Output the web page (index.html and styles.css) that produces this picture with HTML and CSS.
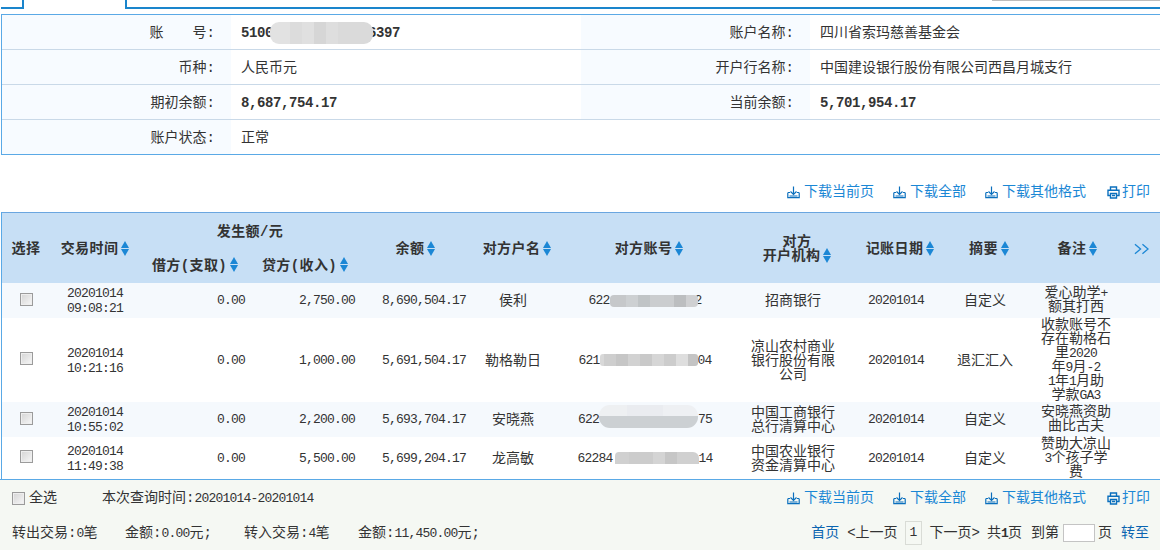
FILE: index.html
```html
<!DOCTYPE html>
<html lang="zh-CN">
<head>
<meta charset="utf-8">
<title>账户明细</title>
<link rel="stylesheet" href="styles.css">
</head>
<body>
<svg class="defs" width="0" height="0" aria-hidden="true">
  <symbol id="dl" viewBox="0 0 13 13">
    <path d="M6.5 0.5V8M3.5 5.5L6.5 8.5L9.5 5.5M1 6.5H3M10 6.5H12M0.8 6.5V11.7H12.2V6.5M2.5 10H10.5" fill="none" stroke="currentColor" stroke-width="1.2"/>
  </symbol>
  <symbol id="pr" viewBox="0 0 13 13">
    <path d="M3.5 4V1H9.5V4M3.5 9.5H1V4.2H12V9.5H9.5M3.5 7.5H9.5V12H3.5ZM5 9.5H8" fill="none" stroke="currentColor" stroke-width="1.4"/>
  </symbol>
</svg>

<div class="tabs">
  <div class="tab-start"></div>
  <div class="tab-active"></div>
  <div class="tab-rest"></div>
  <div class="tab-shade"></div>
</div>

<section class="info">
  <div class="lbl">账<span class="wide"></span>号:</div>
  <div class="val"><b class="num-b">5100</b><span class="blur blur-acc"></span><b class="num-b">6397</b></div>
  <div class="lbl">账户名称:</div>
  <div class="val">四川省索玛慈善基金会</div>
  <div class="lbl">币种:</div>
  <div class="val">人民币元</div>
  <div class="lbl">开户行名称:</div>
  <div class="val">中国建设银行股份有限公司西昌月城支行</div>
  <div class="lbl">期初余额:</div>
  <div class="val"><b class="num-b">8,687,754.17</b></div>
  <div class="lbl">当前余额:</div>
  <div class="val"><b class="num-b">5,701,954.17</b></div>
  <div class="lbl last">账户状态:</div>
  <div class="val last span3">正常</div>
</section>

<div class="toolbar top">
  <a class="tool"><svg class="ico"><use href="#dl"/></svg>下载当前页</a>
  <a class="tool"><svg class="ico"><use href="#dl"/></svg>下载全部</a>
  <a class="tool"><svg class="ico"><use href="#dl"/></svg>下载其他格式</a>
  <a class="tool print"><svg class="ico"><use href="#pr"/></svg>打印</a>
</div>

<div class="table-wrap">
<table class="grid">
  <colgroup>
    <col class="c1"><col class="c2"><col class="c3"><col class="c3"><col class="c4"><col class="c5"><col class="c6"><col class="c7"><col class="c8"><col class="c9"><col class="c10"><col class="c11">
  </colgroup>
  <thead>
    <tr class="h1">
      <th rowspan="2">选择</th>
      <th rowspan="2">交易时间<i class="sort"></i></th>
      <th colspan="2">发生额/元</th>
      <th rowspan="2">余额<i class="sort"></i></th>
      <th rowspan="2" class="shift">对方户名<i class="sort"></i></th>
      <th rowspan="2" class="shift">对方账号<i class="sort"></i></th>
      <th rowspan="2" class="org shift">对方<br>开户机构<i class="sort"></i></th>
      <th rowspan="2" class="shift">记账日期<i class="sort"></i></th>
      <th rowspan="2" class="shift">摘要<i class="sort"></i></th>
      <th rowspan="2" class="shift-s">备注<i class="sort"></i></th>
      <th rowspan="2"><svg class="more" viewBox="0 0 16 12"><path d="M1 1L7 6L1 11M9 1L15 6L9 11" fill="none" stroke="currentColor" stroke-width="1.4"/></svg></th>
    </tr>
    <tr class="h2">
      <th>借方(支取)<i class="sort"></i></th>
      <th>贷方(收入)<i class="sort"></i></th>
    </tr>
  </thead>
  <tbody>
    <tr class="r-a tint">
      <td class="flat"><span class="check"></span></td>
      <td class="n dt">20201014<br>09:08:21</td>
      <td class="n amt">0.00</td>
      <td class="n amt">2,750.00</td>
      <td class="n amt">8,690,504.17</td>
      <td>侯利</td>
      <td class="n">622<span class="blur blur-1"></span>2</td>
      <td>招商银行</td>
      <td class="n">20201014</td>
      <td>自定义</td>
      <td class="flat">爱心助学<span class="n">+</span><br>额其打西</td>
      <td class="flat"></td>
    </tr>
    <tr class="r-b">
      <td class="flat"><span class="check"></span></td>
      <td class="n dt">20201014<br>10:21:16</td>
      <td class="n amt">0.00</td>
      <td class="n amt">1,000.00</td>
      <td class="n amt">5,691,504.17</td>
      <td>勒格勒日</td>
      <td class="n">621<span class="blur blur-2"></span>04</td>
      <td>凉山农村商业<br>银行股份有限<br>公司</td>
      <td class="n">20201014</td>
      <td>退汇汇入</td>
      <td class="flat">收款账号不<br>存在勒格石<br>里<span class="n">2020</span><br>年<span class="n">9</span>月<span class="n">-2</span><br><span class="n">1</span>年<span class="n">1</span>月助<br>学款<span class="n">GA3</span></td>
      <td class="flat"></td>
    </tr>
    <tr class="r-a tint">
      <td class="flat"><span class="check"></span></td>
      <td class="n dt">20201014<br>10:55:02</td>
      <td class="n amt">0.00</td>
      <td class="n amt">2,200.00</td>
      <td class="n amt">5,693,704.17</td>
      <td>安晓燕</td>
      <td class="n">622<span class="blur blur-3"></span>75</td>
      <td>中国工商银行<br>总行清算中心</td>
      <td class="n">20201014</td>
      <td>自定义</td>
      <td class="flat">安晓燕资助<br>曲比古夫</td>
      <td class="flat"></td>
    </tr>
    <tr class="r-c">
      <td class="flat"><span class="check"></span></td>
      <td class="n dt">20201014<br>11:49:38</td>
      <td class="n amt">0.00</td>
      <td class="n amt">5,500.00</td>
      <td class="n amt">5,699,204.17</td>
      <td>龙高敏</td>
      <td class="n">62284<span class="blur blur-4"></span>14</td>
      <td>中国农业银行<br>资金清算中心</td>
      <td class="n">20201014</td>
      <td>自定义</td>
      <td class="flat">赞助大凉山<br><span class="n">3</span>个孩子学<br>费</td>
      <td class="flat"></td>
    </tr>
  </tbody>
</table>
</div>

<footer class="foot">
  <div class="foot-row one">
    <div class="foot-left">
      <span class="check"></span><span class="all">全选</span>
      <span class="query">本次查询时间:<span class="n">20201014-20201014</span></span>
    </div>
    <div class="toolbar">
      <a class="tool"><svg class="ico"><use href="#dl"/></svg>下载当前页</a>
      <a class="tool"><svg class="ico"><use href="#dl"/></svg>下载全部</a>
      <a class="tool"><svg class="ico"><use href="#dl"/></svg>下载其他格式</a>
      <a class="tool print"><svg class="ico"><use href="#pr"/></svg>打印</a>
    </div>
  </div>
  <div class="foot-row two">
    <div class="stats">
      <span class="s1">转出交易:<span class="n">0</span>笔</span>
      <span class="s2">金额:<span class="n">0.00</span>元;</span>
      <span class="s3">转入交易:<span class="n">4</span>笔</span>
      <span>金额:<span class="n">11,450.00</span>元;</span>
    </div>
    <div class="pager">
      <a class="pg-link">首页</a>
      <span class="pg-prev">&lt;上一页</span>
      <span class="pg-cur n">1</span>
      <span class="pg-next">下一页&gt;</span>
      <span class="pg-total">共<b class="n">1</b>页</span>
      <span class="pg-to">到第</span>
      <span class="pg-input"></span>
      <span class="pg-unit">页</span>
      <a class="pg-link">转至</a>
    </div>
  </div>
</footer>
</body>
</html>
```
FILE: styles.css
```css
* { box-sizing: border-box; }
html, body { margin: 0; padding: 0; }
body {
  width: 1160px;
  height: 550px;
  overflow: hidden;
  background: #fff;
  color: #333;
  font: 14px/14px "Liberation Mono", "Noto Sans CJK SC", sans-serif;
}
.defs { display: block; height: 0; }

.n { font-family: "Liberation Mono", "Noto Sans CJK SC", monospace; font-size: 13px; letter-spacing: -0.8px; }
span.n, b.n { line-height: 0; }
.num-b { font-family: "Liberation Mono", monospace; font-size: 14px; letter-spacing: -0.4px; font-weight: 700; color: #333; }

/* tab strip */
.tabs { position: relative; display: flex; height: 9px; padding-left: 1px; }
.tab-start { width: 23px; border-right: 2px solid #1a85cc; border-bottom: 2px solid #1a85cc; }
.tab-active { width: 101px; }
.tab-rest { flex: 1; border-left: 2px solid #1a85cc; border-bottom: 2px solid #1a85cc; }
.tab-shade { position: absolute; top: 0; right: 0; width: 168px; height: 1px; background: #bdbdbd; }

/* account info */
.info {
  display: grid;
  grid-template-columns: 229px 350px 229px 360px;
  width: 1170px;
  margin: 5px 0 0 1px;
  border: 1px solid #5aa9e6;
}
.lbl, .val { height: 35px; padding-top: 2px; display: flex; align-items: center; border-bottom: 1px solid #c9d9e8; white-space: pre; }
.lbl { justify-content: flex-end; padding-right: 16px; background: #f7fbff; }
.val { padding-left: 10px; }
.lbl.last, .val.last { height: 34px; border-bottom: 0; }
.span3 { grid-column: span 3; }
.wide { width: 29px; }

/* tool links */
.toolbar { display: flex; justify-content: flex-end; gap: 19px; padding-right: 10px; }
.toolbar.top { height: 57px; padding-top: 30px; }
.tool { display: flex; align-items: center; height: 14px; color: #1b87d5; white-space: nowrap; }
.tool.print { margin-left: 2px; }
.ico { width: 13px; height: 13px; margin-right: 4px; color: #0a6fbd; }
.print .ico { margin-right: 2px; }

/* grid */
.table-wrap { margin-left: 1px; width: 1159px; border-left: 1px solid #5aa9e6; }
.grid { width: 1158px; table-layout: fixed; border-collapse: collapse; border-top: 1px solid #6aa6e0; }
.c1 { width: 48px; } .c2 { width: 90px; } .c3 { width: 110px; } .c4 { width: 111px; }
.c5 { width: 84px; } .c6 { width: 180px; } .c7 { width: 116px; } .c8 { width: 90px; }
.c9 { width: 88px; } .c10 { width: 94px; } .c11 { width: 37px; }
.grid th, .grid td { padding: 0; text-align: center; vertical-align: middle; white-space: nowrap; }
.grid td { padding-top: 2px; }
.grid td.flat { padding-top: 0; }
.grid th { background: #c7dff5; font-weight: 700; color: #333; letter-spacing: 0.4px; }
.h1 { height: 36px; }
.h1 th { padding-top: 2px; }
.h2 { height: 34px; }
.grid th.shift { padding-left: 8px; }
.grid th.shift-s { padding-left: 3px; }
.sort {
  display: inline-block;
  width: 8px;
  height: 15px;
  margin: -3px 0 -1px 3px;
  vertical-align: middle;
}
.sort::before, .sort::after {
  content: "";
  display: block;
  width: 0;
  height: 0;
  border-left: 4px solid transparent;
  border-right: 4px solid transparent;
}
.sort::before { border-bottom: 7px solid #1b87d5; margin-bottom: 1px; }
.sort::after { border-top: 7px solid #1b87d5; }
.more { display: block; width: 15px; height: 12px; margin: 0 0 0 11px; color: #1b87d5; }
.r-a { height: 35px; }
.r-b { height: 84px; }
.r-c { height: 42px; }
.tint td { background: #f5f9fd; }
.grid td.amt { text-align: right; padding-right: 5px; }
.grid td.dt { line-height: 15px; }
.check {
  display: block;
  width: 13px;
  height: 13px;
  margin: -2px auto 0;
  border: 1px solid #9b9b9b;
  background: linear-gradient(135deg, #d4d4d4, #f7f7f7);
  box-shadow: inset 0 0 0 1px #eee;
}

/* mosaics */
.blur { position: relative; z-index: 1; display: inline-block; vertical-align: middle; }
.blur-acc {
  width: 103px; height: 22px; margin: -10px -5px -10px -3px; border-radius: 9px;
  background: linear-gradient(90deg, #e2e2e2 0 20px, #dcdcdc 20px 32px, #e0e0e0 32px 44px, #d6d6d6 44px 56px, #dedede 56px 68px, #dadada 68px 103px);
}
.blur-1 {
  width: 88px; height: 12px; margin: 0 -3px 0 0; border-radius: 4px;
  background: linear-gradient(90deg, #c6c8ca 0 16px, #cdd0d2 16px 28px, #c0c4c6 28px 40px, #cbcdcf 40px 64px, #bcbec0 64px 76px, #cfd0d2 76px 88px);
}
.blur-2 {
  width: 98px; height: 12px; margin: 0; border-radius: 3px;
  background: linear-gradient(90deg, #d8d8d8 0 4px, #cecece 4px 16px, #c6c6c6 16px 28px, #d2d2d2 28px 40px, #c9c9c9 40px 52px, #d6d6d6 52px 64px, #cccccc 64px 76px, #dedede 76px 88px, #c4c4c4 88px 98px);
}
.blur-3 {
  width: 99px; height: 23px; margin: -12px 0 -6px; border-radius: 11px;
  background:
    linear-gradient(180deg, transparent 0 11px, #ccd0d3 11px 23px),
    linear-gradient(90deg, #eef0f2 0 28px, #eaecf0 28px 64px, #eef0f3 64px 99px);
}
.blur-4 {
  width: 84px; height: 12px; margin: 0 0 0 2px; border-radius: 4px 6px 0 0;
  background: linear-gradient(90deg, #d0d0d0 0 14px, #cccccc 14px 38px, #d4d4d4 38px 50px, #c6c6c6 50px 62px, #d0d0d0 62px 84px);
}

/* footer */
.foot { height: 71px; padding-top: 1px; border-top: 1px solid #5aa9e6; background: #f5f8f3; }
.foot-row { display: flex; justify-content: space-between; align-items: center; }
.foot-row.one { height: 35px; }
.foot-row.two { height: 35px; }
.foot-left { display: flex; align-items: center; padding-left: 12px; }
.foot-left .check { margin: 0 4px 0 0; }
.query { margin-left: 45px; }
.stats { display: flex; padding-left: 12px; }
.s1 { width: 113px; }
.s2 { width: 119px; }
.s3 { width: 114px; }
.pager { display: flex; align-items: center; padding-right: 11px; }
.pg-link { color: #0a64b0; }
.pg-prev { margin-left: 8px; }
.pg-cur { width: 17px; height: 24px; margin-left: 7px; border: 1px solid #d9dcd6; display: flex; align-items: center; justify-content: center; }
.pg-next { margin-left: 8px; }
.pg-total { margin-left: 7px; }
.pg-to { margin-left: 9px; }
.pg-input { width: 32px; height: 18px; margin-left: 4px; background: #fff; border: 1px solid #c4c4c4; }
.pg-unit { margin-left: 3px; }
.pager .pg-link:last-child { margin-left: 9px; }
```
